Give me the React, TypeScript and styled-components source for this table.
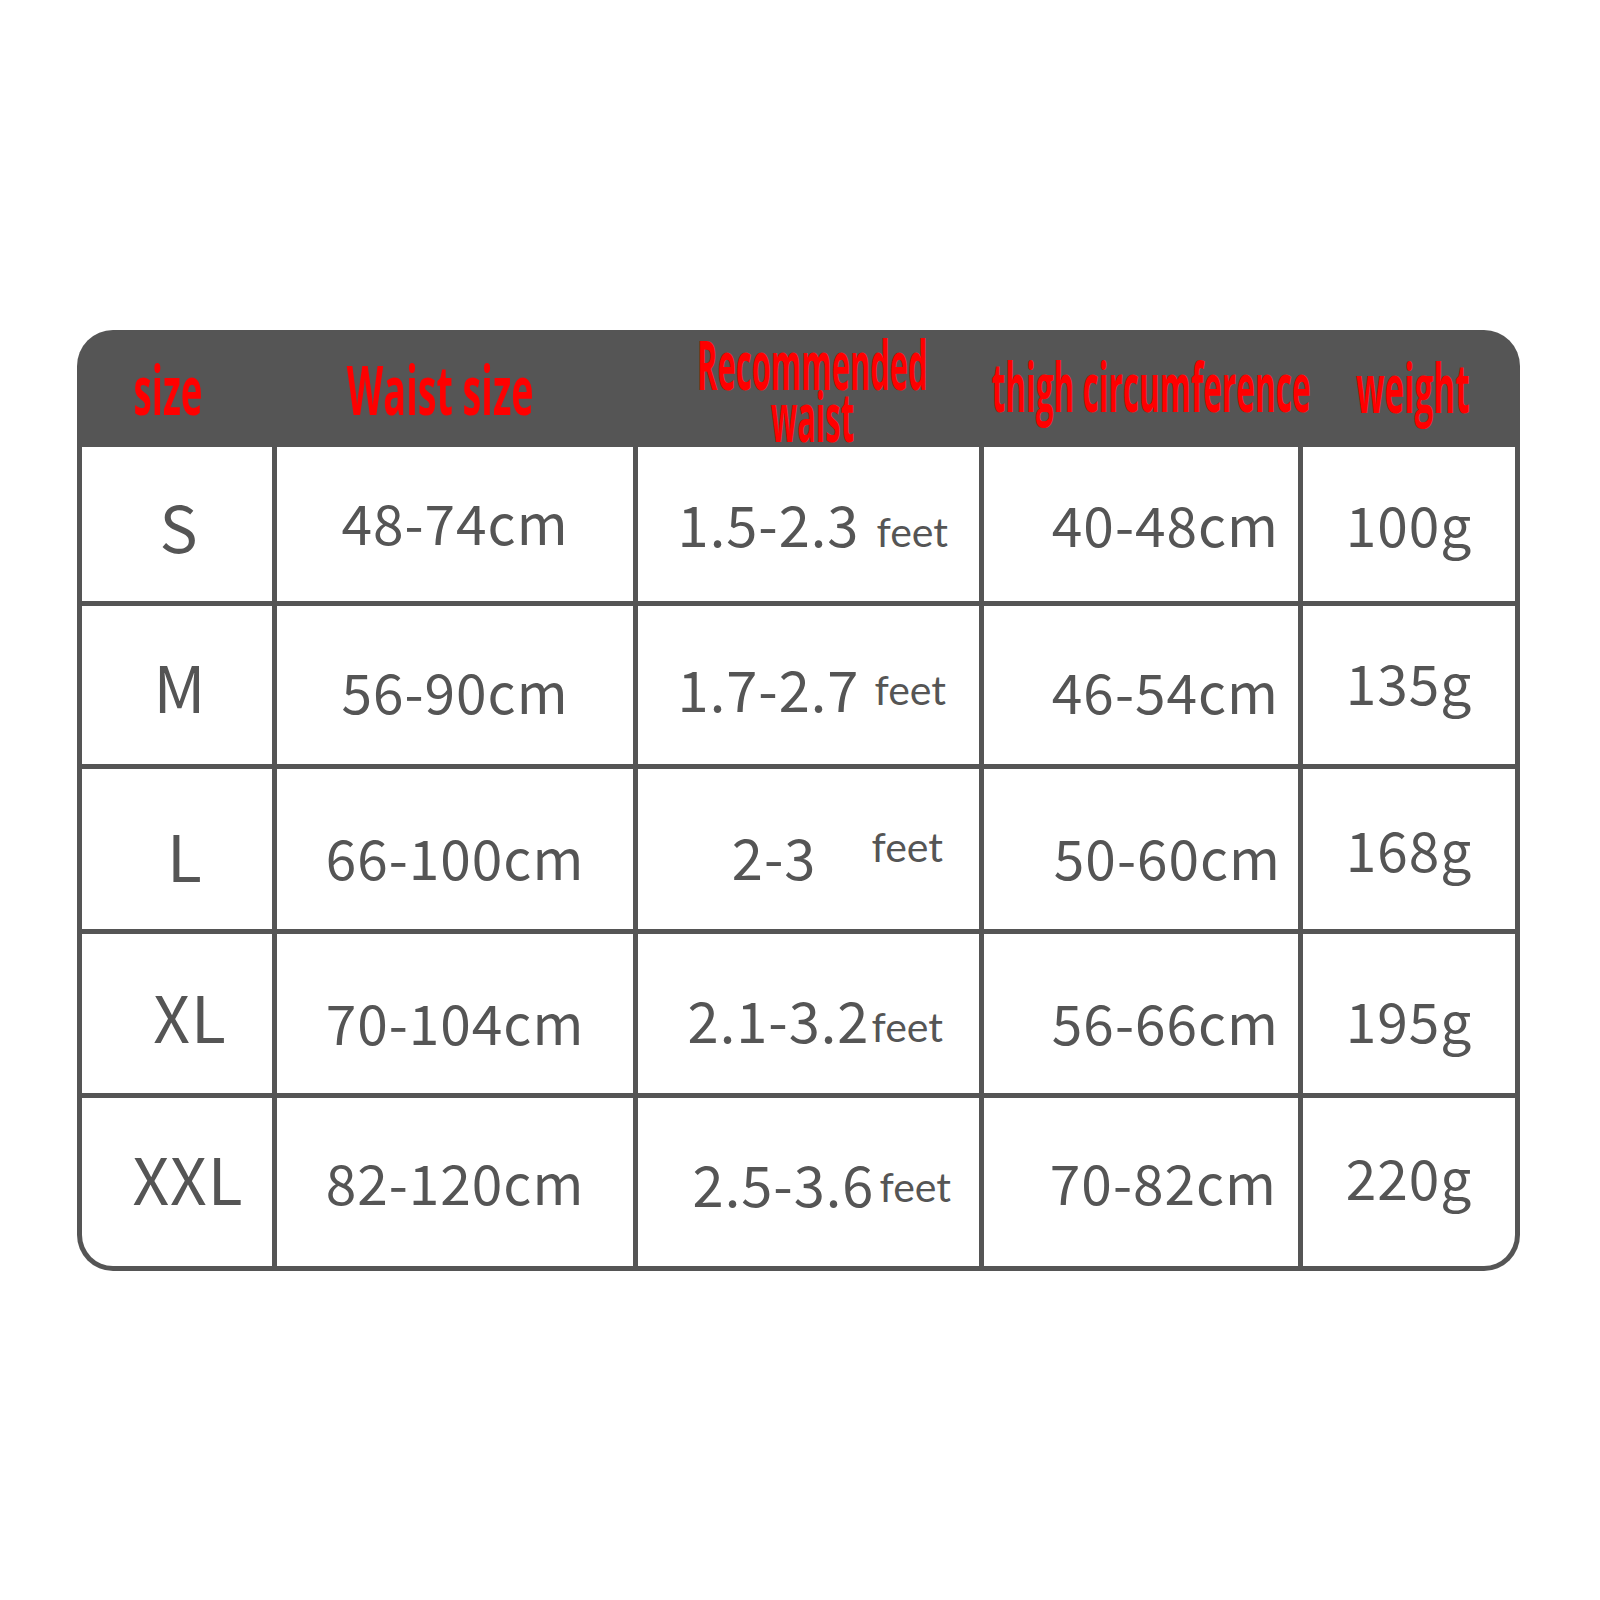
import React from "react";
import styled, { createGlobalStyle } from "styled-components";

const GlobalStyle = createGlobalStyle`
  html, body {
    margin: 0;
    padding: 0;
    background: #ffffff;
  }
`;

const LINE = "#555555";
const INK = "#555555";
const BODY_FONT = `"Noto Sans CJK SC", "Noto Sans", sans-serif`;

interface HeadDef {
  text: string[];
  scale: number;
  dx: number;
  top: number;
}

const headers: HeadDef[] = [
  { text: ["size"], scale: 0.54, dx: -9, top: 28 },
  { text: ["Waist size"], scale: 0.555, dx: -15, top: 28 },
  { text: ["Recommended", "waist"], scale: 0.455, dx: 4, top: 3 },
  { text: ["thigh circumference"], scale: 0.465, dx: 10, top: 25 },
  { text: ["weight"], scale: 0.49, dx: 4, top: 26 },
];

interface RowDef {
  size: string;
  sizePad: number;
  waist: string;
  num: string;
  feetGap: number;
  feetRight: number;
  feetRise: number;
  thigh: string;
  thighRight: number;
  weight: string;
  base: number[];
}

const rows: RowDef[] = [
  {
    size: "S",
    sizePad: 4,
    waist: "48-74cm",
    num: "1.5-2.3",
    feetGap: 17,
    feetRight: 31,
    feetRise: 0,
    thigh: "40-48cm",
    thighRight: 19,
    weight: "100g",
    base: [106, 98, 100, 100, 100],
  },
  {
    size: "M",
    sizePad: 6,
    waist: "56-90cm",
    num: "1.7-2.7",
    feetGap: 15,
    feetRight: 33,
    feetRise: 7,
    thigh: "46-54cm",
    thighRight: 19,
    weight: "135g",
    base: [107, 108, 106, 108, 99],
  },
  {
    size: "L",
    sizePad: 16,
    waist: "66-100cm",
    num: "2-3",
    feetGap: 55,
    feetRight: 36,
    feetRise: 18,
    thigh: "50-60cm",
    thighRight: 17,
    weight: "168g",
    base: [113, 111, 111, 111, 103],
  },
  {
    size: "XL",
    sizePad: 26,
    waist: "70-104cm",
    num: "2.1-3.2",
    feetGap: 2,
    feetRight: 36,
    feetRise: 1,
    thigh: "56-66cm",
    thighRight: 19,
    weight: "195g",
    base: [109, 111, 109, 111, 109],
  },
  {
    size: "XXL",
    sizePad: 22,
    waist: "82-120cm",
    num: "2.5-3.6",
    feetGap: 5,
    feetRight: 28,
    feetRise: 5,
    thigh: "70-82cm",
    thighRight: 21,
    weight: "220g",
    base: [107, 107, 109, 107, 102],
  },
];

const Page = styled.div`
  padding: 330px 0 0 77px;
`;

const Table = styled.div`
  display: grid;
  width: fit-content;
  grid-template-columns: 190px 356px 341px 314px 212px;
  grid-template-rows: 107px 154px 158px 160px 159px 168px;
  gap: 5px;
  padding: 5px;
  background: ${LINE};
  border-radius: 36px;
`;

const HeadCell = styled.div<{ $top: number }>`
  display: flex;
  justify-content: center;
  align-items: flex-start;
  padding-top: ${(p) => p.$top}px;
  min-width: 0;
`;

const HeadLabel = styled.span<{ $scale: number; $dx: number }>`
  display: inline-block;
  white-space: nowrap;
  text-align: center;
  font-family: "Open Sans", "Noto Sans", sans-serif;
  font-weight: 700;
  font-size: 68px;
  line-height: 52px;
  color: #ff0000;
  transform: translateX(${(p) => p.$dx}px) scaleX(${(p) => p.$scale});
`;

type Corner = "none" | "left" | "right";

const Cell = styled.div<{
  $top: number;
  $justify: string;
  $padLeft?: number;
  $padRight?: number;
  $corner: Corner;
}>`
  display: flex;
  align-items: flex-start;
  justify-content: ${(p) => p.$justify};
  padding: ${(p) => p.$top}px ${(p) => p.$padRight ?? 0}px 0
    ${(p) => p.$padLeft ?? 0}px;
  background: #ffffff;
  min-width: 0;
  border-bottom-left-radius: ${(p) => (p.$corner === "left" ? "31px" : "0")};
  border-bottom-right-radius: ${(p) => (p.$corner === "right" ? "31px" : "0")};
`;

const Value = styled.span<{ $size: number }>`
  font-family: ${BODY_FONT};
  font-weight: 400;
  font-size: ${(p) => p.$size}px;
  letter-spacing: 1px;
  line-height: 1;
  color: ${INK};
  white-space: nowrap;
`;

const Feet = styled.span<{ $gap: number; $rise: number }>`
  font-family: Lato, "Noto Sans", sans-serif;
  font-size: 41px;
  letter-spacing: 0;
  line-height: 0;
  margin-left: ${(p) => p.$gap}px;
  vertical-align: ${(p) => p.$rise}px;
`;

const ascent = (size: number) => Math.round(size * 0.936);

export default function App() {
  return (
    <>
      <GlobalStyle />
      <Page>
        <Table>
          {headers.map((h, i) => (
            <HeadCell key={"h" + i} $top={h.top}>
              <HeadLabel $scale={h.scale} $dx={h.dx}>
                {h.text.map((line, j) => (
                  <React.Fragment key={j}>
                    {j > 0 && <br />}
                    {line}
                  </React.Fragment>
                ))}
              </HeadLabel>
            </HeadCell>
          ))}
          {rows.map((r, i) => {
            const last = i === rows.length - 1;
            return (
              <React.Fragment key={r.size}>
                <Cell
                  $top={r.base[0] - ascent(64)}
                  $justify="center"
                  $padLeft={r.sizePad}
                  $corner={last ? "left" : "none"}
                >
                  <Value $size={64}>{r.size}</Value>
                </Cell>
                <Cell $top={r.base[1] - ascent(55)} $justify="center" $corner="none">
                  <Value $size={55}>{r.waist}</Value>
                </Cell>
                <Cell
                  $top={r.base[2] - ascent(56)}
                  $justify="flex-end"
                  $padRight={r.feetRight}
                  $corner="none"
                >
                  <Value $size={56}>
                    {r.num}
                    <Feet $gap={r.feetGap} $rise={r.feetRise}>
                      feet
                    </Feet>
                  </Value>
                </Cell>
                <Cell
                  $top={r.base[3] - ascent(55)}
                  $justify="flex-end"
                  $padRight={r.thighRight}
                  $corner="none"
                >
                  <Value $size={55}>{r.thigh}</Value>
                </Cell>
                <Cell
                  $top={r.base[4] - ascent(55)}
                  $justify="center"
                  $corner={last ? "right" : "none"}
                >
                  <Value $size={55}>{r.weight}</Value>
                </Cell>
              </React.Fragment>
            );
          })}
        </Table>
      </Page>
    </>
  );
}
